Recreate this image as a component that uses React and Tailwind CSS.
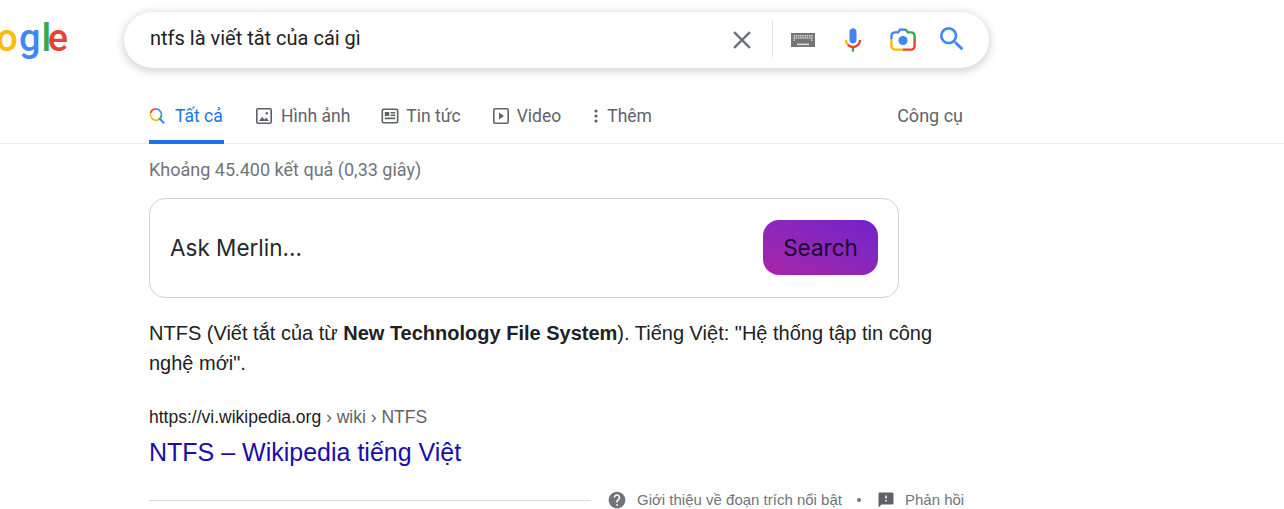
import React from 'react';

function KeyboardIcon() {
  const keys = [];
  for (let r = 0; r < 3; r++) {
    for (let c = 0; c < 9; c++) {
      if (r === 2 && c > 0 && c < 8) continue;
      keys.push(<rect key={`${r}-${c}`} x={2.5 + c * 2.2} y={2 + r * 2.2} width="1.5" height="1.5" fill="#d6d6d6" />);
    }
  }
  return (
    <svg width="24" height="14" viewBox="0 0 24 14">
      <rect width="24" height="14" fill="#757575" />
      {keys}
      <rect x="6" y="10.6" width="12" height="1.5" fill="#e0e0e0" />
    </svg>
  );
}

function MicIcon() {
  return (
    <svg width="28" height="28" viewBox="0 0 24 24">
      <path fill="#4285f4" d="m12 15c1.66 0 3-1.31 3-2.97v-7.02c0-1.66-1.34-3.01-3-3.01s-3 1.34-3 3.01v7.02c0 1.66 1.34 2.97 3 2.97z" />
      <path fill="#34a853" d="m11 18.08h2v3.92h-2z" />
      <path fill="#fbbc05" d="m7.05 16.87c-1.27-1.33-2.05-2.83-2.05-4.87h2c0 1.45 0.56 2.42 1.47 3.38v0.32l-1.15 1.18z" />
      <path fill="#ea4335" d="m12 16.93a4.97 5.25 0 0 1 -3.54 -1.55l-1.41 1.49c1.26 1.34 3.02 2.13 4.95 2.13 3.87 0 6.99-2.92 6.99-6.99h-2c0 2.92-2.24 4.92-4.99 4.92z" />
    </svg>
  );
}

function LensIcon() {
  return (
    <svg width="26" height="24" viewBox="0 0 26 24" fill="none" strokeWidth="2.4">
      <path stroke="#4285f4" d="M1.4 11V8a3.6 3.6 0 0 1 3.6-3.6h3.2L10 1.6h6" />
      <path stroke="#34a853" d="M16 1.6l1.8 2.8H21A3.6 3.6 0 0 1 24.6 8v3" />
      <path stroke="#ea4335" d="M24.6 11v7a3.6 3.6 0 0 1-3.6 3.6h-8" />
      <path stroke="#fbbc05" d="M13 21.6H5A3.6 3.6 0 0 1 1.4 18v-7" />
      <circle cx="13" cy="12.5" r="4.6" fill="#4285f4" />
    </svg>
  );
}

function SearchBlueIcon() {
  return (
    <svg width="32" height="32" viewBox="0 0 24 24" fill="#4285f4">
      <path d="M15.5 14h-.79l-.28-.27A6.471 6.471 0 0 0 16 9.5 6.5 6.5 0 1 0 9.5 16c1.61 0 3.09-.59 4.23-1.57l.27.28v.79l5 4.99L20.49 19l-4.99-5zm-6 0C7.01 14 5 11.99 5 9.5S7.01 5 9.5 5 14 7.01 14 9.5 11.99 14 9.5 14z" />
    </svg>
  );
}

function AllTabIcon() {
  return (
    <svg width="16" height="16" viewBox="0 0 16 16" fill="none" strokeWidth="1.7">
      <path stroke="#ea4335" d="M1.6 5A5.6 5.6 0 0 1 6.7.9" />
      <path stroke="#4285f4" d="M6.7.9a5.8 5.8 0 0 1 5.8 5.8" />
      <path stroke="#34a853" d="M12.5 6.7a5.8 5.8 0 0 1-3 5" />
      <path stroke="#fbbc05" d="M9.5 11.8A5.8 5.8 0 0 1 1.6 5" />
      <path stroke="#4285f4" strokeWidth="2" d="M10.8 10.8l4.4 4.4" />
    </svg>
  );
}

function ImageIcon() {
  return (
    <svg width="18" height="18" viewBox="0 0 18 18" fill="#5f6368">
      <path d="M3 1h12a2 2 0 0 1 2 2v12a2 2 0 0 1-2 2H3a2 2 0 0 1-2-2V3a2 2 0 0 1 2-2zm0 1.6a.4.4 0 0 0-.4.4v12c0 .2.2.4.4.4h12a.4.4 0 0 0 .4-.4V3a.4.4 0 0 0-.4-.4H3z" />
      <path d="M4 14l3.2-4.2 2.2 2.7 1.7-2L14 14H4z" />
      <circle cx="11.8" cy="6.2" r="1.2" />
    </svg>
  );
}

function NewsIcon() {
  return (
    <svg width="18" height="16" viewBox="0 0 18 16" fill="#5f6368">
      <path d="M2.5.5h13a2 2 0 0 1 2 2v11a2 2 0 0 1-2 2h-13a2 2 0 0 1-2-2v-11a2 2 0 0 1 2-2zm0 1.6a.4.4 0 0 0-.4.4v11c0 .2.2.4.4.4h13a.4.4 0 0 0 .4-.4v-11a.4.4 0 0 0-.4-.4h-13z" />
      <path d="M3.8 4h4.4v4H3.8zM9.6 4h4.6v1.5H9.6zM9.6 6.6h4.6v1.5H9.6zM3.8 9.6h10.4v1.6H3.8z" />
    </svg>
  );
}

function VideoIcon() {
  return (
    <svg width="18" height="18" viewBox="0 0 18 18" fill="#5f6368">
      <path d="M3 1h12a2 2 0 0 1 2 2v12a2 2 0 0 1-2 2H3a2 2 0 0 1-2-2V3a2 2 0 0 1 2-2zm0 1.6a.4.4 0 0 0-.4.4v12c0 .2.2.4.4.4h12a.4.4 0 0 0 .4-.4V3a.4.4 0 0 0-.4-.4H3z" />
      <path d="M7 5.6L12 9l-5 3.4z" />
    </svg>
  );
}

function DotsIcon() {
  return (
    <svg className="ml-[2px]" width="4" height="14" viewBox="0 0 4 14" fill="#5f6368">
      <circle cx="2" cy="2" r="1.6" />
      <circle cx="2" cy="7" r="1.6" />
      <circle cx="2" cy="12" r="1.6" />
    </svg>
  );
}

function Tab({ icon, label, active, gap = 'gap-2', width = '' }) {
  return (
    <div className={`relative flex h-[52px] items-center pb-[4px] ${gap} ${width} ${active ? 'text-[#1a73e8]' : 'text-[#5f6368]'}`}>
      {icon}
      <span>{label}</span>
      {active && <div className="absolute bottom-0 left-0 right-0 h-[4px] bg-[#1a73e8]" />}
    </div>
  );
}

export default function App() {
  return (
    <div className="h-[509px] w-full overflow-hidden bg-white font-['Liberation_Sans',sans-serif]">
      {/* thanh tìm kiếm */}
      <div className="flex pt-3">
        <div className="flex h-14 w-[124px] items-center justify-end overflow-hidden pr-[56px] pb-[3px]">
          <span className="whitespace-nowrap font-['Roboto',sans-serif] text-[38px] font-medium tracking-[1px]">
            <span className="text-[#4285f4]">G</span>
            <span className="text-[#ea4335]">o</span>
            <span className="text-[#fbbc05]">o</span>
            <span className="text-[#4285f4]">g</span>
            <span className="tracking-[-3.5px] text-[#34a853]">l</span>
            <span className="tracking-[0px] text-[#ea4335]">e</span>
          </span>
        </div>
        <div className="flex h-14 w-[865px] items-center rounded-[28px] bg-white pr-[21px] pl-[26px] shadow-[0_2px_8px_1px_rgba(64,60,67,0.24)]">
          <div className="flex-1 pb-[5px] font-['Roboto',sans-serif] text-[20px] text-[#202124]">ntfs là viết tắt của cái gì</div>
          <svg className="mr-[15px] mb-[1px]" width="30" height="30" viewBox="0 0 24 24" fill="#70757a">
            <path d="M19 6.41L17.59 5 12 10.59 6.41 5 5 6.41 10.59 12 5 17.59 6.41 19 12 13.41 17.59 19 19 17.59 13.41 12z" />
          </svg>
          <div className="mr-[18px] mb-[2px] h-9 w-px bg-[#dfe1e5]" />
          <div className="mr-[24px] mb-[1px] flex"><KeyboardIcon /></div>
          <div className="mr-[23px] mb-[1px] flex"><MicIcon /></div>
          <div className="mr-[20px] flex"><LensIcon /></div>
          <div className="mb-[3px] flex"><SearchBlueIcon /></div>
        </div>
      </div>

      {/* các tab */}
      <div className="mt-[24px] flex h-[52px] w-full items-start border-b border-[#ebebeb] pl-[149px] font-['Roboto',sans-serif] text-[17.5px]">
        <div className="flex w-[814px] items-center">
          <div className="flex gap-[31px]">
            <Tab icon={<AllTabIcon />} label="Tất cả" active gap="gap-[10px]" width="w-[75px]" />
            <Tab icon={<ImageIcon />} label="Hình ảnh" />
            <Tab icon={<NewsIcon />} label="Tin tức" gap="gap-[7px]" />
            <Tab icon={<VideoIcon />} label="Video" gap="gap-[7px]" />
            <Tab icon={<DotsIcon />} label="Thêm" gap="gap-[9px]" />
          </div>
          <div className="ml-auto pb-[6px] text-[18px] text-[#5f6368]">Công cụ</div>
        </div>
      </div>

      {/* kết quả */}
      <div className="w-[815px] pl-[149px]">
        <div className="pt-[15px] font-['Roboto',sans-serif] text-[18px] leading-[22px] text-[#70757a]">Khoảng 45.400 kết quả (0,33 giây)</div>

        <div className="mt-[17px] flex h-[100px] w-[750px] items-center justify-between rounded-2xl border border-[#cbd5e1] pr-5 pl-5">
          <span className="font-['Inter',sans-serif] text-[22.5px] text-[#27272a]">Ask Merlin...</span>
          <div className="-mt-[2px] flex h-[55px] w-[115px] items-center justify-center rounded-2xl bg-gradient-to-tr from-[#a822a8] to-[#7220cc] pt-[2px] font-['Inter',sans-serif] text-[22.5px] text-[#18062c]">
            Search
          </div>
        </div>

        <p className="mt-[20px] w-[800px] text-[20px] leading-[30px] text-[#202124]">
          NTFS (Viết tắt của từ <b>New Technology File System</b>). Tiếng Việt: "Hệ thống tập tin công nghệ mới".
        </p>

        <div className="mt-[26px] text-[17.5px] leading-[26px] text-[#202124]">
          https://vi.wikipedia.org <span className="text-[#5f6368]">› wiki › NTFS</span>
        </div>
        <div className="mt-[6px] text-[25px] leading-[32px] text-[#1a0dab]">NTFS – Wikipedia tiếng Việt</div>

        {/* chân đoạn trích */}
        <div className="mt-[21px] flex w-[815px] items-center text-[15px] whitespace-nowrap text-[#70757a]">
          <div className="h-px w-[442px] shrink-0 bg-[#dadce0]" />
          <svg className="ml-[16px] shrink-0" width="20" height="20" viewBox="0 0 24 24" fill="#70757a">
            <path d="M12 2C6.48 2 2 6.48 2 12s4.48 10 10 10 10-4.48 10-10S17.52 2 12 2zm1 17h-2v-2h2v2zm2.07-7.75l-.9.92C13.45 12.9 13 13.5 13 15h-2v-.5c0-1.1.45-2.1 1.17-2.83l1.24-1.26c.37-.36.59-.86.59-1.41 0-1.1-.9-2-2-2s-2 .9-2 2H8c0-2.21 1.79-4 4-4s4 1.79 4 4c0 .88-.36 1.68-.93 2.25z" />
          </svg>
          <span className="ml-[10px]">Giới thiệu về đoạn trích nổi bật</span>
          <span className="ml-[15px] h-[4px] w-[4px] shrink-0 rounded-full bg-[#70757a]" />
          <svg className="ml-[16px] shrink-0" width="18" height="18" viewBox="0 0 24 24" fill="#5f6368">
            <path d="M20 2H4c-1.1 0-1.99.9-1.99 2L2 22l4-4h14c1.1 0 2-.9 2-2V4c0-1.1-.9-2-2-2zm-7 12h-2v-2h2v2zm0-4h-2V6h2v4z" />
          </svg>
          <span className="ml-[10px]">Phản hồi</span>
        </div>
      </div>
    </div>
  );
}
